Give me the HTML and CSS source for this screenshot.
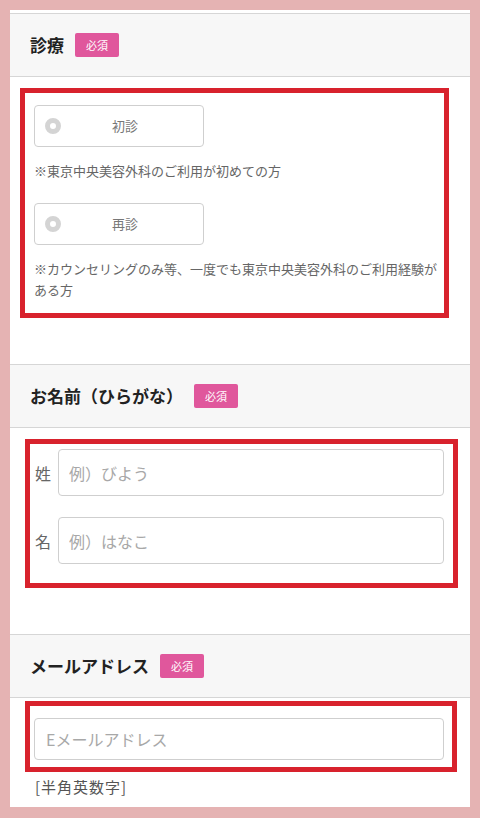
FILE: index.html
```html
<!DOCTYPE html>
<html lang="ja">
<head>
<meta charset="UTF-8">
<meta name="viewport" content="width=device-width, initial-scale=1.0">
<title>予約フォーム</title>
<link rel="stylesheet" href="styles.css">
</head>
<body>

<div class="panel">

  <!-- 診療 -->
  <div class="head head-first">
    <h2>診療</h2><span class="must">必須</span>
  </div>
  <div class="mark mark-visit">
    <label class="radio">
      <span class="dot"></span><span class="radio-label">初診</span>
    </label>
    <p class="note">※東京中央美容外科のご利用が初めての方</p>
    <label class="radio radio-second">
      <span class="dot"></span><span class="radio-label">再診</span>
    </label>
    <p class="note">※カウンセリングのみ等、一度でも東京中央美容外科のご利用経験がある方</p>
  </div>

  <!-- お名前 -->
  <div class="head head-name">
    <h2>お名前（ひらがな）</h2><span class="must">必須</span>
  </div>
  <div class="mark mark-name">
    <div class="name-row">
      <span class="name-label">姓</span>
      <input type="text" class="field field-name" placeholder="例）びよう">
    </div>
    <div class="name-row name-row-second">
      <span class="name-label">名</span>
      <input type="text" class="field field-name" placeholder="例）はなこ">
    </div>
  </div>

  <!-- メールアドレス -->
  <div class="head head-mail">
    <h2>メールアドレス</h2><span class="must">必須</span>
  </div>
  <div class="mark mark-mail">
    <input type="text" class="field field-mail" placeholder="Eメールアドレス">
  </div>
  <p class="hint">[半角英数字]</p>

</div>

</body>
</html>
```

FILE: styles.css
```css
html, body {
  margin: 0;
  padding: 0;
}

body {
  background: #e5b3b3;
  font-family: "Noto Sans CJK JP", "Noto Sans", sans-serif;
  color: #333;
  padding: 10px;
  height: 818px;
  box-sizing: border-box;
  overflow: hidden;
}

.panel {
  background: #fff;
  padding: 3px 0 9px 0;
}

/* section headers */
.head {
  height: 62px;
  background: #f7f7f7;
  border-top: 1px solid #d6d6d6;
  border-bottom: 1px solid #d6d6d6;
  display: flex;
  align-items: center;
  padding-left: 20px;
}

.head h2 {
  margin: 0;
  font-size: 17px;
  font-weight: bold;
  line-height: 24px;
  color: #222;
}

.head-name { margin-top: 46px; }
.head-mail { margin-top: 46px; }

.must {
  display: inline-block;
  width: 44px;
  height: 24px;
  line-height: 24px;
  margin-left: 11px;
  background: #e0579c;
  color: #fff;
  font-size: 11px;
  text-align: center;
  border-radius: 2px;
}

/* red annotation boxes */
.mark {
  border: 5px solid #d8222d;
  box-sizing: border-box;
}

.mark-visit {
  margin: 11px 0 0 10px;
  width: 429px;
  padding: 12px 4px 13px 9px;
}

.mark-name {
  margin: 11px 0 0 15px;
  width: 433px;
  padding: 5px 9px 19px 5px;
}

.mark-mail {
  margin: 3px 0 0 15px;
  width: 432px;
  padding: 12px 9px 7px 4px;
}

/* radio buttons */
.radio {
  display: flex;
  align-items: center;
  width: 170px;
  height: 42px;
  box-sizing: border-box;
  border: 1px solid #cfcfcf;
  border-radius: 4px;
  background: #fff;
  padding-left: 10px;
}

.radio-second { margin-top: 22px; }

.dot {
  width: 16px;
  height: 16px;
  box-sizing: border-box;
  border: 5px solid #d4d4d4;
  border-radius: 50%;
  background: #fff;
}

.radio-label {
  margin-left: 51px;
  font-size: 13px;
  color: #777;
  line-height: 20px;
}

.note {
  margin: 13px 0 0 0;
  font-size: 13px;
  line-height: 21px;
  color: #666;
}

/* name inputs */
.name-row {
  display: flex;
  align-items: center;
}

.name-row-second { margin-top: 21px; }

.name-label {
  width: 23px;
  font-size: 16px;
  color: #666;
  line-height: 20px;
}

.field {
  box-sizing: border-box;
  border: 1px solid #cfcfcf;
  border-radius: 4px;
  background: #fff;
  font-family: "Noto Sans CJK JP", "Noto Sans", sans-serif;
  font-size: 16px;
  color: #333;
  outline: none;
  margin: 0;
}

.field::placeholder {
  color: #a8a8a8;
}

.field-name {
  width: 386px;
  height: 47px;
  padding: 0 10px;
}

.field-mail {
  display: block;
  width: 410px;
  height: 42px;
  padding: 0 11px;
}

.hint {
  margin: 4px 0 0 25px;
  font-size: 15px;
  line-height: 22px;
  letter-spacing: 1px;
  color: #555;
}
```
